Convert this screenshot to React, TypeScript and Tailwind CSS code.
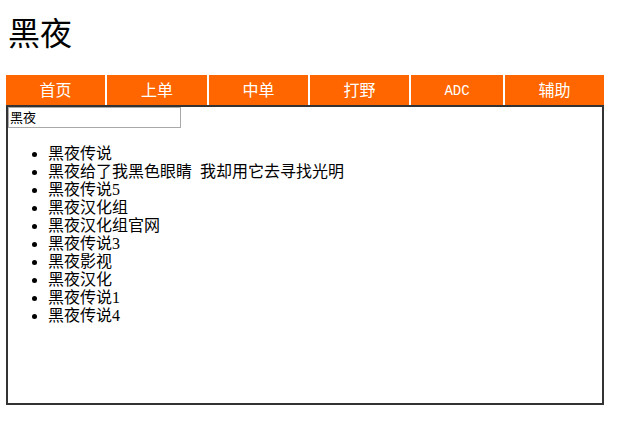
import { useState } from "react";

const tabs = ["首页", "上单", "中单", "打野", "ADC", "辅助"];

const suggestions = [
  "黑夜传说",
  "黑夜给了我黑色眼睛\u2002我却用它去寻找光明",
  "黑夜传说5",
  "黑夜汉化组",
  "黑夜汉化组官网",
  "黑夜传说3",
  "黑夜影视",
  "黑夜汉化",
  "黑夜传说1",
  "黑夜传说4",
];

export default function App() {
  const [query, setQuery] = useState("黑夜");

  return (
    <main className="bg-white pt-4 pr-[25px] pb-4 pl-1.5 font-['Liberation_Serif','Noto_Sans_CJK_SC',serif] text-base leading-[18px] text-black">
      <h1 className="mb-[23px] pl-0.5 text-[32px] leading-9 font-normal">黑夜</h1>
      <nav>
        <ul className="grid grid-cols-[99fr_100fr_99fr_99fr_92fr_99fr] gap-0.5">
          {tabs.map((tab) => (
            <li key={tab}>
              <a
                href="#"
                className={`block h-[30px] bg-[#ff6600] pt-0.5 text-center leading-7 text-white ${
                  tab === "ADC" ? "font-['Liberation_Mono',monospace] text-sm/7" : ""
                }`}
              >
                {tab}
              </a>
            </li>
          ))}
        </ul>
      </nav>
      <section className="min-h-[300px] border-2 border-[#333333]">
        <input
          type="text"
          aria-label="搜索"
          value={query}
          onChange={(e) => setQuery(e.target.value)}
          className="block h-[21px] w-[173px] border border-[#a9a9a9] bg-white px-px pb-0.5 text-[13px] leading-4 outline-none"
        />
        <ul className="mt-[17px] list-disc pl-10">
          {suggestions.map((item) => (
            <li key={item}>{item}</li>
          ))}
        </ul>
      </section>
    </main>
  );
}
